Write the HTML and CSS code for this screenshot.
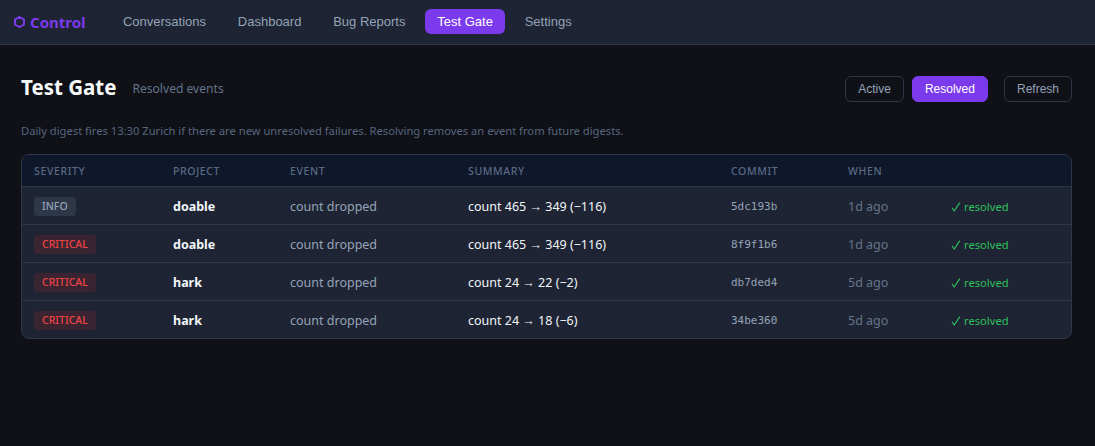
FILE: index.html
```html
<!DOCTYPE html>
<html lang="en">
<head>
<meta charset="utf-8">
<title>Test Gate</title>
<link rel="stylesheet" href="styles.css">
</head>
<body>
<nav class="nav">
  <span class="brand"><svg class="hex" viewBox="0 0 11 12" width="11" height="12" aria-hidden="true"><path d="M5.5 1 10 3.5V8.500L5.500 11 1 8.500V3.500Z"/></svg>Control</span>
  <a class="nav-link">Conversations</a>
  <a class="nav-link">Dashboard</a>
  <a class="nav-link">Bug Reports</a>
  <a class="nav-link is-active">Test Gate</a>
  <a class="nav-link">Settings</a>
</nav>
<main class="main">
  <header class="head">
    <h1 class="title">Test Gate</h1>
    <span class="subtitle">Resolved events</span>
    <div class="actions">
      <div class="toggle">
        <button class="btn">Active</button>
        <button class="btn is-active">Resolved</button>
      </div>
      <button class="btn">Refresh</button>
    </div>
  </header>
  <p class="note">Daily digest fires 13:30 Zurich if there are new unresolved failures. Resolving removes an event from future digests.</p>
  <div class="card">
    <table class="table">
      <colgroup>
        <col class="c1"><col class="c2"><col class="c3"><col class="c4"><col class="c5"><col class="c6"><col class="c7">
      </colgroup>
      <thead>
        <tr><th>Severity</th><th>Project</th><th>Event</th><th>Summary</th><th>Commit</th><th>When</th><th></th></tr>
      </thead>
      <tbody>
        <tr><td><span class="badge info">INFO</span></td><td class="project">doable</td><td class="event">count dropped</td><td class="summary">count 465 → 349 (−116)</td><td class="commit">5dc193b</td><td class="when">1d ago</td><td class="status"><svg class="check" viewBox="0 0 10 10" width="10" height="10" aria-hidden="true"><path d="M1 5.8 3.2 9 8.8 .6"/></svg>resolved</td></tr>
        <tr><td><span class="badge critical">CRITICAL</span></td><td class="project">doable</td><td class="event">count dropped</td><td class="summary">count 465 → 349 (−116)</td><td class="commit">8f9f1b6</td><td class="when">1d ago</td><td class="status"><svg class="check" viewBox="0 0 10 10" width="10" height="10" aria-hidden="true"><path d="M1 5.8 3.2 9 8.8 .6"/></svg>resolved</td></tr>
        <tr><td><span class="badge critical">CRITICAL</span></td><td class="project">hark</td><td class="event">count dropped</td><td class="summary">count 24 → 22 (−2)</td><td class="commit">db7ded4</td><td class="when">5d ago</td><td class="status"><svg class="check" viewBox="0 0 10 10" width="10" height="10" aria-hidden="true"><path d="M1 5.8 3.2 9 8.8 .6"/></svg>resolved</td></tr>
        <tr><td><span class="badge critical">CRITICAL</span></td><td class="project">hark</td><td class="event">count dropped</td><td class="summary">count 24 → 18 (−6)</td><td class="commit">34be360</td><td class="when">5d ago</td><td class="status"><svg class="check" viewBox="0 0 10 10" width="10" height="10" aria-hidden="true"><path d="M1 5.8 3.2 9 8.8 .6"/></svg>resolved</td></tr>
      </tbody>
    </table>
  </div>
</main>
</body>
</html>
```
FILE: styles.css
```css
* { box-sizing: border-box; }
html, body { height: 100%; }
body {
  margin: 0;
  background: #0f1117;
  color: #e2e8f0;
  font-family: "Noto Sans", "Open Sans", sans-serif;
  font-size: 12.5px;
  overflow: hidden;
}
.nav {
  display: flex;
  align-items: center;
  height: 45px;
  padding: 0 14px;
  gap: 7px;
  background: #1e2433;
  border-bottom: 1px solid #2d3748;
}
.brand {
  display: flex;
  align-items: center;
  gap: 5px;
  font-size: 15px;
  font-weight: 700;
  color: #7c3aed;
  margin-right: 18px;
  white-space: nowrap;
}
.hex { fill: none; stroke: #7c3aed; stroke-width: 2; }
.nav-link {
  font-family: "Liberation Sans", Arial, sans-serif;
  font-size: 13px;
  color: #94a3b8;
  padding: 5px 12.4px;
  line-height: 15px;
  border-radius: 6px;
  height: 25px;
  margin-top: -1px;
  white-space: nowrap;
}
.nav-link.is-active { background: #7c3aed; color: #fff; }
.main { padding: 28px 23px 0 21px; }
.head { display: flex; align-items: center; height: 32px; }
.title { margin: 0 0 4px; font-size: 20.5px; font-weight: 700; color: #f8fafc; line-height: 28px; }
.subtitle { margin-left: 16px; font-size: 12.1px; color: #64748b; position: relative; top: -1px; }
.actions { margin-left: auto; display: flex; gap: 16px; }
.toggle { display: flex; gap: 8px; }
.btn {
  height: 26px;
  padding: 0 12px;
  font-family: "Liberation Sans", Arial, sans-serif;
  font-size: 12px;
  color: #94a3b8;
  background: transparent;
  border: 1px solid #2d3748;
  border-radius: 6px;
}
.btn.is-active { background: #7c3aed; border-color: #7c3aed; color: #fff; }
.note { margin: 18px 0 15px; font-size: 11.2px; line-height: 16px; color: #56657f; }
.card {
  background: #1e2433;
  border: 1px solid #2d3748;
  border-radius: 8px;
  overflow: hidden;
}
.table { width: 100%; border-collapse: collapse; table-layout: fixed; }
.c1 { width: 139px; } .c2 { width: 117px; } .c3 { width: 178px; } .c4 { width: 263px; }
.c5 { width: 117px; } .c6 { width: 103px; } .c7 { width: auto; }
th {
  height: 31px;
  padding: 1px 12px 0;
  background: #0f172a;
  border-bottom: 1px solid #2d3748;
  color: #5a6a84;
  font-size: 10.5px;
  font-weight: 500;
  letter-spacing: 0.06em;
  text-transform: uppercase;
  text-align: left;
}
td {
  height: 38px;
  padding: 2px 12px 0;
  border-bottom: 1px solid #2d3748;
  white-space: nowrap;
}
tbody tr:last-child td { border-bottom: 0; }
.badge {
  display: inline-block;
  padding: 0 8px;
  height: 19px;
  line-height: 19px;
  border-radius: 4px;
  font-size: 10.5px;
  font-weight: 500;
  vertical-align: middle;
}
.badge.info { background: #2d3748; color: #94a3b8; }
.badge.critical { background: #3a2432; color: #ef4444; }
.project { font-weight: 700; color: #f1f5f9; }
.event { color: #94a3b8; }
.summary { color: #f1f5f9; }
.commit { font-family: "DejaVu Sans Mono", monospace; font-size: 11px; color: #94a3b8; }
.when { color: #64748b; }
.status { color: #2ec05c; font-size: 11.2px; }
.check { fill: none; stroke: #2ec05c; stroke-width: 1.1; margin-right: 3px; vertical-align: -1px; }
```
